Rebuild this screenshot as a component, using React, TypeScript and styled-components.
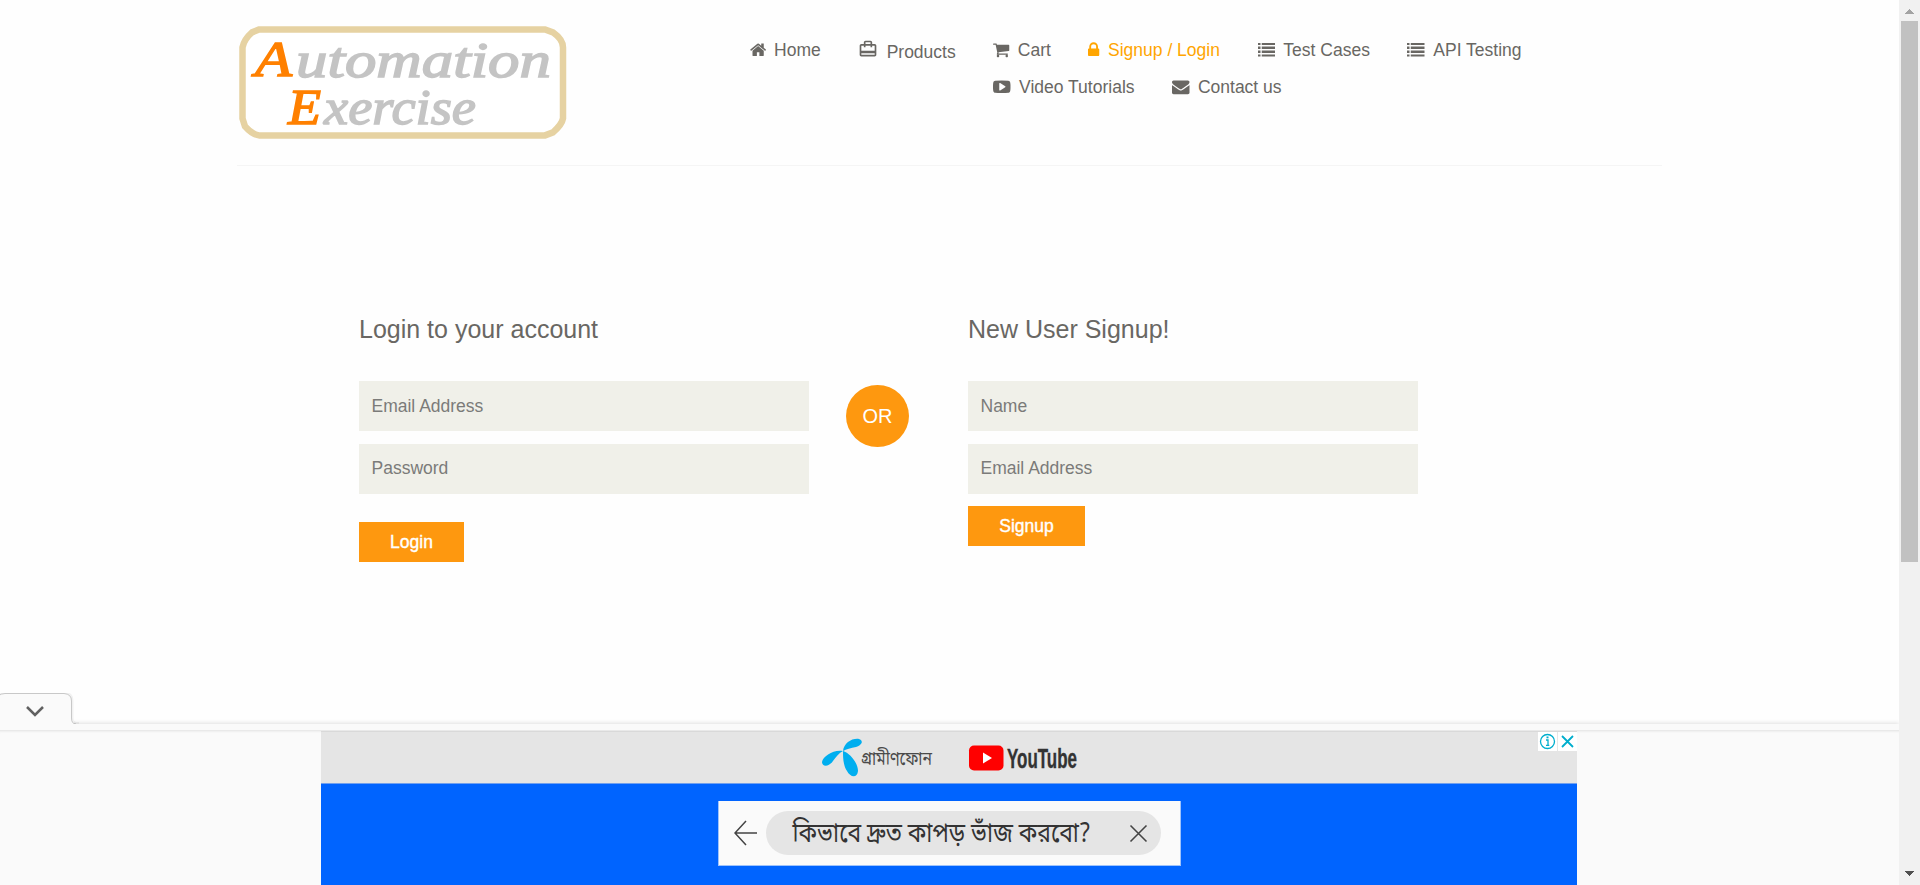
import React from "react";
import styled, { createGlobalStyle } from "styled-components";
import { MdCardTravel } from "react-icons/md";

const GlobalStyle = createGlobalStyle`
  * { box-sizing: border-box; }
  body { margin: 0; background: #fefefe; overflow: hidden; }
  body, input, button { font-family: "Liberation Sans", Arial, sans-serif; font-size: 17.5px; }
`;

const Window = styled.div`
  position: relative;
  display: flex;
  width: 1920px;
  height: 885px;
  overflow: hidden;
`;

const Page = styled.div`
  flex: 1;
  display: flex;
  flex-direction: column;
  color: #696763;
`;

const Header = styled.header`
  width: 1425px;
  height: 166px;
  margin: 0 auto;
  padding-top: 25px;
  display: flex;
  border-bottom: 1px solid #f5f5f5;
`;

const LogoLink = styled.a`
  display: block;
  width: 487px;
  padding-left: 2px;
`;

const Nav = styled.nav`
  display: flex;
  align-items: flex-start;
  padding: 12px 0 0 25.5px;
`;

const WrappedLinks = styled.div`
  display: grid;
  row-gap: 12px;
`;

const LinkRow = styled.div`
  display: flex;
`;

const NavLink = styled.a<{ $active?: boolean; $drop?: number; $lift?: number }>`
  display: flex;
  align-items: center;
  height: 25px;
  margin-right: 37.6px;
  white-space: nowrap;
  color: ${(p) => (p.$active ? "orange" : "#696763")};
  svg { flex: none; display: block; margin: 0 8.3px ${(p) => p.$lift ?? 0}px 0; }
  span { padding-top: ${(p) => p.$drop ?? 2}px; }
`;

const Main = styled.main`
  display: flex;
  align-items: flex-start;
  padding: 146px 0 0 359px;
`;

const FormColumn = styled.form`
  width: 450px;
  display: flex;
  flex-direction: column;
  align-items: flex-start;
`;

const Heading = styled.h2`
  margin: 0 0 37px;
  height: 32px;
  font-size: 25px;
  line-height: 35px;
  font-weight: 400;
`;

const Field = styled.input<{ $raise?: number }>`
  width: 100%;
  height: 50px;
  margin-bottom: 13px;
  padding: 0 0 ${(p) => p.$raise ?? 0}px 12.5px;
  border: 0;
  outline: 0;
  background: #f0f0e9;
  color: #696763;
  &::placeholder { color: #7b7b79; opacity: 1; }
`;

const SubmitButton = styled.button<{ $width: number; $gap: number }>`
  width: ${(p) => p.$width}px;
  height: 40px;
  margin-top: ${(p) => p.$gap}px;
  padding: 1px 0 0;
  border: 0;
  background: #fe980f;
  color: #fff;
  -webkit-text-stroke: 0.4px #fff;
`;

const OrBadge = styled.div`
  width: 63px;
  height: 62px;
  margin: 73px 59px 0 37px;
  border-radius: 50%;
  background: #fe980f;
  color: #fff;
  font-size: 20px;
  line-height: 62px;
  text-align: center;
`;

const Scrollbar = styled.div`
  width: 21px;
  background: #f1f1f1;
  display: flex;
  flex-direction: column;
  align-items: center;
  svg { display: block; }
`;

const Thumb = styled.div`
  width: 17px;
  height: 541px;
  background: #c1c1c1;
  margin-bottom: 302px;
`;

const AdDock = styled.aside`
  position: absolute;
  left: 0;
  bottom: 0;
  width: 1899px;
`;

const Tab = styled.div`
  width: 75px;
  height: 31px;
  svg { display: block; }
`;

const DockStrip = styled.div`
  height: 6px;
  background: #fafafa;
  box-shadow: 0 -1px 4px rgba(0, 0, 0, 0.12);
  clip-path: inset(-6px 0 0 74px);
`;

const DockBody = styled.div`
  height: 155px;
  padding-left: 321px;
  background: #fafafa;
  border-top: 1px solid #e9e9e9;
  box-shadow: inset 0 2px 2px -1px rgba(0, 0, 0, 0.05);
`;

const StripBase = styled.div`
  background: #fafafa;
`;

const Ad = styled.div`
  width: 1256px;
  height: 154px;
  background: #0064ff;
`;

const AdTop = styled.div`
  display: flex;
  align-items: flex-start;
  height: 53px;
  padding-left: 500px;
  background: #e5e5e5;
  border-top: 1px solid #d9d9d9;
  border-bottom: 1px solid #71a0ee;
  svg { display: block; }
`;

const AdBrands = styled.div`
  width: 716px;
  svg { overflow: visible; }
`;

const AdChoices = styled.div`
  display: flex;
  gap: 1px;
  margin-left: 1px;
  svg { background: #fff; }
`;

const SearchCard = styled.div`
  display: flex;
  align-items: center;
  width: 463px;
  height: 65px;
  margin: 17px 0 0 397px;
  padding-left: 15px;
  border: 1px solid #9fc3fb;
  border-top: 0;
  background: #fafafa;
`;

const SearchPill = styled.div`
  display: flex;
  align-items: center;
  justify-content: space-between;
  width: 395px;
  height: 44px;
  margin-left: 9px;
  padding: 0 14px 0 24px;
  border-radius: 22px;
  background: #e5e5e5;
  svg { overflow: visible; }
`;

const glyphs = {
  home: {
    x: 64, w: 1664,
    d: "M1472 992v480q0 26-19 45t-45 19h-384v-384h-256v384h-384q-26 0-45-19t-19-45v-480q0-1 .5-3t.5-3l575-474 575 474q1 2 1 6zm223-69l-62 74q-8 9-21 11h-3q-13 0-21-7l-692-577-692 577q-12 8-24 7-13-2-21-11l-62-74q-8-10-7-23.5t11-21.5l719-599q32-26 76-26t76 26l244 204v-195q0-14 9-23t23-9h192q14 0 23 9t9 23v408l219 182q10 8 11 21.5t-7 23.5z",
  },
  cart: {
    x: 64, w: 1664,
    d: "M704 1536q0 52-38 90t-90 38-90-38-38-90 38-90 90-38 90 38 38 90zm896 0q0 52-38 90t-90 38-90-38-38-90 38-90 90-38 90 38 38 90zm128-1088v512q0 24-16.5 42.5t-40.5 21.5l-1044 122q13 60 13 70 0 16-24 64h920q26 0 45 19t19 45-19 45-45 19h-1024q-26 0-45-19t-19-45q0-11 8-31.5t16-36 21.5-40 15.5-29.5l-177-823h-204q-26 0-45-19t-19-45 19-45 45-19h256q16 0 28.5 6.5t19.5 15.5 13 24.5 8 26 5.5 29.5 4.5 26h1201q26 0 45 19t19 45z",
  },
  lock: {
    x: 320, w: 1152,
    d: "M640 768h512v-192q0-106-75-181t-181-75-181 75-75 181v192zm832 96v576q0 40-28 68t-68 28h-960q-40 0-68-28t-28-68v-576q0-40 28-68t68-28h32v-192q0-184 132-316t316-132 316 132 132 316v192h32q40 0 68 28t28 68z",
  },
  list: {
    x: 0, w: 1792,
    d: "M0 205h256v210H0zM384 205h1408v210H384zM0 563h256v256H0zM384 563h1408v256H384zM0 973h256v256H0zM384 973h1408v256H384zM0 1382h256v210H0zM384 1382h1408v210H384z",
  },
  video: {
    x: 0, w: 1792,
    d: "M1280 896q0-37-30-54l-512-320q-31-20-65-2-33 18-33 56v640q0 38 33 56 16 8 31 8 20 0 34-10l512-320q30-17 30-54zm512 0q0 96-1 150t-8.5 136.5-22.5 147.5q-16 73-69 123t-124 58q-222 25-671 25t-671-25q-71-8-124.5-58t-69.5-123q-14-65-21.5-147.5t-8.5-136.5-1-150 1-150 8.5-136.5 22.5-147.5q16-73 69-123t124-58q222-25 671-25t671 25q71 8 124.5 58t69.5 123q14 65 21.5 147.5t8.5 136.5 1 150z",
  },
  mail: {
    x: 0, w: 1792,
    d: "M1792 710v794q0 66-47 113t-113 47h-1472q-66 0-113-47t-47-113v-794q44 49 101 87 362 246 497 345 57 42 92.5 65.5t94.5 48 110 24.5h2q51 0 110-24.5t94.5-48 92.5-65.5q170-123 498-345 57-39 100-87zm0-294q0 79-49 151t-122 123q-376 261-468 325-10 7-42.5 31t-54 38.5-52 32.5-57.5 27-50 9h-2q-23 0-50-9t-57.5-27-52-32.5-54-38.5-42.5-31q-91-64-262-182.5t-205-142.5q-62-42-117-115.5t-55-136.5q0-78 41.5-130t118.5-52h1472q65 0 112.5 47t47.5 113z",
  },
};

function Glyph({ name }: { name: keyof typeof glyphs }) {
  const g = glyphs[name];
  return (
    <svg width={(g.w / 1792) * 17.5} height={17.5} viewBox={`${g.x} 0 ${g.w} 1792`} fill="currentColor">
      <path d={g.d} />
    </svg>
  );
}

const LogoText = styled.text`
  font-family: "Liberation Serif", "Times New Roman", serif;
  font-style: italic;
  font-size: 51px;
  stroke-width: 1.5px;
`;

function Logo() {
  return (
    <svg width="328" height="115" viewBox="0 -0.4 328 115">
      <path d="M20 4H306L314 7Q324 14 324 22V93Q323 99 314 107L306 110H20Q13 109 6 101L3.500 93V22Q5 14 13 7Z" fill="#fff" stroke="#e6d2a2" strokeWidth="6.500" />
      <LogoText x="16" y="51" fill="#ff8000" stroke="#ff8000" textLength="37" lengthAdjust="spacingAndGlyphs">A</LogoText>
      <LogoText x="57" y="52" fill="#c4c4c4" stroke="#c4c4c4" textLength="255" lengthAdjust="spacingAndGlyphs">utomation</LogoText>
      <LogoText x="49" y="99" fill="#ff8000" stroke="#ff8000" textLength="33" lengthAdjust="spacingAndGlyphs">E</LogoText>
      <LogoText x="85" y="99" fill="#c4c4c4" stroke="#c4c4c4" textLength="152" lengthAdjust="spacingAndGlyphs">xercise</LogoText>
    </svg>
  );
}

const BengaliBrand = styled.text`
  font-family: "Noto Sans Bengali", "Lohit Bengali", "Noto Sans", sans-serif;
  font-size: 19px;
`;

const YouTubeWord = styled.text`
  font-family: "Liberation Sans", Arial, sans-serif;
  font-weight: 700;
  font-size: 28.5px;
`;

const QueryText = styled.text`
  font-family: "Noto Sans Bengali", "Lohit Bengali", "Noto Sans", sans-serif;
  font-size: 27px;
`;

function Brands() {
  return (
    <svg width="290" height="50" viewBox="821 732 290 50">
      <g fill="#00aeef">
        <path d="M843 751C844 743 852 738 859 739C864 741 862 745 856 747C851 748 846 749 843 751Z" />
        <path d="M843 751C834 749 823 756 822 762C822 767 829 767 833 761C836 757 839 753 843 751Z" />
        <path d="M843 751C850 753 858 763 858 771C857 779 850 777 847 771C843 765 843 757 843 751Z" />
      </g>
      <BengaliBrand x="861" y="764.500" fill="#4a4a4a" textLength="71" lengthAdjust="spacingAndGlyphs">গ্রামীণফোন</BengaliBrand>
      <rect x="969" y="745.500" width="34.500" height="25" rx="5" fill="#f00" />
      <path d="M983 752.500L992 758L983 763.500Z" fill="#fff" />
      <YouTubeWord x="1007" y="768" fill="#333" stroke="#333" strokeWidth=".4" textLength="70" lengthAdjust="spacingAndGlyphs">YouTube</YouTubeWord>
    </svg>
  );
}

export default function App() {
  return (
    <>
      <GlobalStyle />
      <Window>
        <Page>
          <Header>
            <LogoLink><Logo /></LogoLink>
            <Nav>
              <NavLink><Glyph name="home" /><span>Home</span></NavLink>
              <NavLink $drop={5} $lift={2}><MdCardTravel size={20} /><span>Products</span></NavLink>
              <WrappedLinks>
                <LinkRow>
                  <NavLink><Glyph name="cart" /><span>Cart</span></NavLink>
                  <NavLink $active><Glyph name="lock" /><span>Signup / Login</span></NavLink>
                  <NavLink><Glyph name="list" /><span>Test Cases</span></NavLink>
                  <NavLink><Glyph name="list" /><span>API Testing</span></NavLink>
                </LinkRow>
                <LinkRow>
                  <NavLink><Glyph name="video" /><span>Video Tutorials</span></NavLink>
                  <NavLink><Glyph name="mail" /><span>Contact us</span></NavLink>
                </LinkRow>
              </WrappedLinks>
            </Nav>
          </Header>
          <Main>
            <FormColumn>
              <Heading>Login to your account</Heading>
              <Field placeholder="Email Address" />
              <Field placeholder="Password" $raise={2} />
              <SubmitButton type="button" $width={105} $gap={15}>Login</SubmitButton>
            </FormColumn>
            <OrBadge>OR</OrBadge>
            <FormColumn>
              <Heading>New User Signup!</Heading>
              <Field placeholder="Name" />
              <Field placeholder="Email Address" $raise={2} />
              <SubmitButton type="button" $width={117} $gap={-1}>Signup</SubmitButton>
            </FormColumn>
          </Main>
        </Page>
        <Scrollbar>
          <svg width="17" height="21" shapeRendering="crispEdges"><path d="M4 14L8.500 9L13 14Z" fill="#a3a3a3" /></svg>
          <Thumb />
          <svg width="17" height="21" shapeRendering="crispEdges"><path d="M4 7L8.500 12L13 7Z" fill="#505050" /></svg>
        </Scrollbar>
        <AdDock>
          <Tab>
            <svg width="80" height="32" viewBox="0 0 80 32" fill="none">
              <path d="M-2 1H65Q71.500 1 71.500 8V25Q71.500 31 77 31V32H-2Z" fill="#fafafa" stroke="#000" strokeOpacity=".05" strokeWidth="4" />
              <path d="M-2 3Q1 .5 5 .5H64Q71.500 1 71.500 8V25Q71.500 31 76 31V40H-2Z" fill="#fafafa" stroke="#c8c8c8" />
              <path d="M27 14L35 22L43 14" stroke="#616161" strokeWidth="2.500" />
            </svg>
          </Tab>
          <StripBase><DockStrip /></StripBase>
          <DockBody>
            <Ad>
              <AdTop>
                <AdBrands><Brands /></AdBrands>
                <AdChoices>
                  <svg width="19" height="19" viewBox="0 0 19 19" fill="none" stroke="#00aecd" strokeWidth="1.300">
                    <circle cx="9.500" cy="9.500" r="7" />
                    <path d="M8 8H10V13M8 13.300H11.300" />
                    <path d="M9.500 4.500V6.300" strokeWidth="2" />
                  </svg>
                  <svg width="19" height="19" viewBox="0 0 19 19" fill="none" stroke="#00aecd" strokeWidth="1.800">
                    <path d="M4 4L15 15M15 4L4 15" />
                  </svg>
                </AdChoices>
              </AdTop>
              <SearchCard>
                <svg width="23" height="26" viewBox="0 0 23 26" fill="none" stroke="#444" strokeWidth="1.500">
                  <path d="M12 1L1 13L12 25M1 13H23" />
                </svg>
                <SearchPill>
                  <svg width="300" height="44" viewBox="0 0 300 44">
                    <QueryText x="2.500" y="31" fill="#333" textLength="298" lengthAdjust="spacingAndGlyphs">কিভাবে দ্রুত কাপড় ভাঁজ করবো?</QueryText>
                  </svg>
                  <svg width="17" height="17" viewBox="0 0 17 17" fill="none" stroke="#444" strokeWidth="1.600">
                    <path d="M.5 .5L16.500 16.500M16.500 .5L.5 16.500" />
                  </svg>
                </SearchPill>
              </SearchCard>
            </Ad>
          </DockBody>
        </AdDock>
      </Window>
    </>
  );
}
